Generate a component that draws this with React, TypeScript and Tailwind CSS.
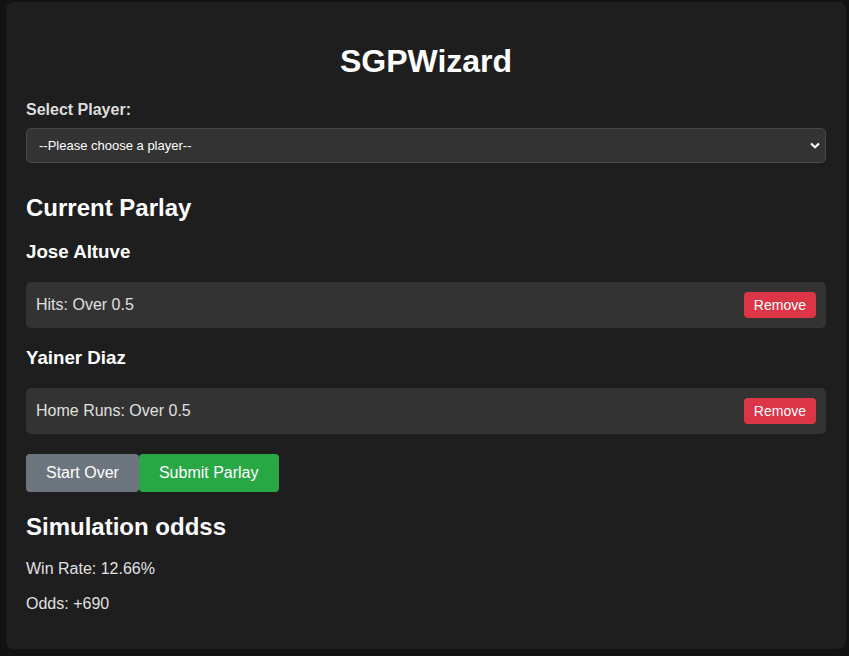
import React from 'react';

type Leg = { player: string; prop: string };

const legs: Leg[] = [
  { player: 'Jose Altuve', prop: 'Hits: Over 0.5' },
  { player: 'Yainer Diaz', prop: 'Home Runs: Over 0.5' },
];

export default function App() {
  return (
    <div className="min-h-[656px] bg-[#121212] pl-[6px] pt-[2px] pb-[9px] font-['Liberation_Sans',Arial,sans-serif] text-[#e0e0e0]">
      <div className="w-[840px] rounded-[8px] bg-[#1e1e1e] p-5">
        <h1 className="mt-[21px] mb-[21px] text-center text-[32px] leading-[37px] font-bold text-white">SGPWizard</h1>

        <label className="mb-[9px] block text-[16px] leading-[18px] font-bold text-[#dddddd]">Select Player:</label>
        <div className="relative">
          <select className="h-[35px] w-full appearance-none rounded-[5px] border border-[#4a4a4a] bg-[#333333] pl-3 text-[13px] text-white outline-none">
            <option>--Please choose a player--</option>
          </select>
          <svg
            className="pointer-events-none absolute top-[14px] right-[6px]"
            width="10"
            height="7"
            viewBox="0 0 10 7"
          >
            <path d="M1 1.5 L5 5.2 L9 1.5" stroke="white" strokeWidth="2.2" fill="none" />
          </svg>
        </div>

        <h2 className="mt-[31px] mb-[19px] text-[24px] leading-[28px] font-bold text-white">Current Parlay</h2>

        {legs.map((leg) => (
          <div key={leg.player}>
            <h3 className="mb-[19px] text-[18.72px] leading-[22px] font-bold text-white">{leg.player}</h3>
            <div className="mb-[19px] flex items-center justify-between rounded-[5px] bg-[#333333] p-[10px]">
              <span className="text-[16px] leading-[18px] text-[#e0e0e0]">{leg.prop}</span>
              <button className="h-[26px] rounded-[4px] bg-[#dc3545] px-[10px] text-[14px] leading-[16px] text-white">
                Remove
              </button>
            </div>
          </div>
        ))}

        <div className="mt-[20px] flex">
          <button className="h-[38px] rounded-[4px] bg-[#6c757d] px-5 text-[16px] text-white">Start Over</button>
          <button className="h-[38px] rounded-[4px] bg-[#28a745] px-5 text-[16px] text-white">Submit Parlay</button>
        </div>

        <h2 className="mt-[21px] mb-[19px] text-[24px] leading-[28px] font-bold text-white">Simulation oddss</h2>
        <p className="mb-[17px] text-[16px] leading-[18px]">Win Rate: 12.66%</p>
        <p className="mb-4 text-[16px] leading-[18px]">Odds: +690</p>
      </div>
    </div>
  );
}
